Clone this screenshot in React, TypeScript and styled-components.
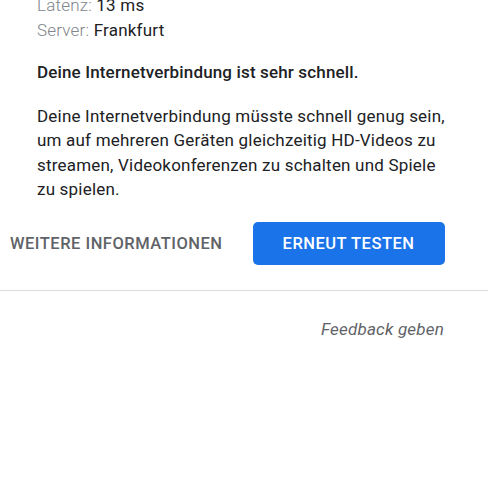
import React from "react";
import styled, { createGlobalStyle } from "styled-components";

const GlobalStyle = createGlobalStyle`
  html, body {
    margin: 0;
    padding: 0;
    background: #ffffff;
  }
  body {
    font-family: Roboto, "Noto Sans", Arial, sans-serif;
    color: #202124;
    overflow: hidden;
  }
`;

const Page = styled.div`
  width: 488px;
  height: 500px;
  background: #ffffff;
  overflow: hidden;
`;

const Content = styled.div`
  padding: 0 40px 0 37px;
  margin-top: -7px;
`;

const Stats = styled.div`
  display: flex;
  flex-direction: column;
  font-size: 17px;
  line-height: 25px;
  letter-spacing: 0.2px;
`;

const StatLine = styled.div`
  color: #202124;
`;

const StatLabel = styled.span`
  color: #80868b;
  font-weight: 300;
`;

const Heading = styled.p`
  margin: 17px 0 0;
  font-size: 17px;
  line-height: 25px;
  font-weight: 500;
  letter-spacing: 0.15px;
`;

const Body = styled.p`
  margin: 19px 0 0;
  font-size: 17px;
  line-height: 24.4px;
  font-weight: 400;
  letter-spacing: 0.2px;
`;

const Actions = styled.div`
  display: flex;
  align-items: center;
  gap: 30px;
  padding: 0 0 0 10px;
  margin-top: 20px;
`;

const TextButton = styled.button`
  border: none;
  background: transparent;
  padding: 0;
  font-family: inherit;
  font-size: 16.5px;
  font-weight: 500;
  color: #5f6368;
  letter-spacing: 0.5px;
`;

const PrimaryButton = styled.button`
  width: 192px;
  height: 43px;
  border: none;
  border-radius: 5px;
  background: #1a73e8;
  color: #ffffff;
  font-family: inherit;
  font-size: 16.5px;
  font-weight: 500;
  letter-spacing: 0.5px;
  padding: 0;
`;

const Divider = styled.hr`
  margin: 25px 0 0;
  border: none;
  border-top: 1px solid #dadce0;
`;

const Footer = styled.div`
  display: flex;
  justify-content: flex-end;
  padding: 0 44px 0 0;
  margin-top: 26px;
`;

const FeedbackLink = styled.span`
  font-size: 17px;
  line-height: 25px;
  font-style: italic;
  letter-spacing: 0.2px;
  color: #5f6368;
`;

const stats = [
  { label: "Latenz:", value: "13 ms" },
  { label: "Server:", value: "Frankfurt" },
];

const App: React.FC = () => {
  return (
    <Page>
      <GlobalStyle />
      <Content>
        <Stats>
          {stats.map((s) => (
            <StatLine key={s.label}>
              <StatLabel>{s.label}</StatLabel> {s.value}
            </StatLine>
          ))}
        </Stats>
        <Heading>Deine Internetverbindung ist sehr schnell.</Heading>
        <Body>
          Deine Internetverbindung müsste schnell genug sein, um auf mehreren
          Geräten gleichzeitig HD-Videos zu streamen, Videokonferenzen zu
          schalten und Spiele zu spielen.
        </Body>
      </Content>
      <Actions>
        <TextButton>WEITERE INFORMATIONEN</TextButton>
        <PrimaryButton>ERNEUT TESTEN</PrimaryButton>
      </Actions>
      <Divider />
      <Footer>
        <FeedbackLink>Feedback geben</FeedbackLink>
      </Footer>
    </Page>
  );
};

export default App;
